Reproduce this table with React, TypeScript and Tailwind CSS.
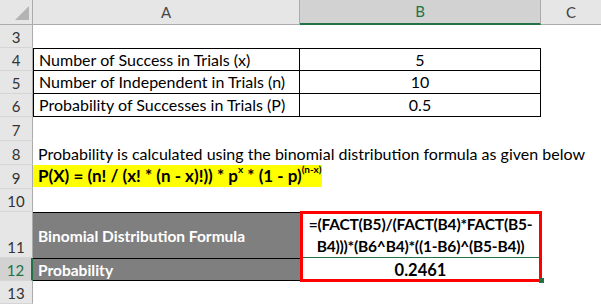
const FONT = "font-['Lato','Liberation_Sans',sans-serif]"

function RowHead({ n, h, active }: { n: number | string; h: string; active?: boolean }) {
  return (
    <div
      className={`${h} flex items-end justify-center pb-[2px] text-[15px] leading-none border-b border-[#d5d5d5] ${
        active
          ? 'bg-[#d2d2d2] text-[#217346] border-r-2 border-r-[#217346]'
          : 'bg-[#e6e6e6] text-[#333] border-r border-r-[#ababab]'
      }`}
    >
      {n}
    </div>
  )
}

export default function App() {
  return (
    <div className={`relative w-[601px] h-[304px] overflow-hidden bg-white text-black ${FONT}`}>
      {/* column headers */}
      <div className="grid grid-cols-[33px_267px_241px_60px] h-[25px] text-[15px] leading-none text-[#444]">
        <div className="bg-[#e6e6e6] border-r border-b border-[#ababab] flex items-end justify-end pr-[3px] pb-[4px]">
          <svg width="14" height="14" viewBox="0 0 14 14">
            <polygon points="14,0 14,14 0,14" fill="#b4b4b4" />
          </svg>
        </div>
        <div className="bg-[#e6e6e6] border-r border-b border-[#ababab] flex items-center justify-center">A</div>
        <div className="bg-[#d2d2d2] border-r border-[#ababab] border-b-2 border-b-[#217346] flex items-center justify-center text-[#217346]">
          B
        </div>
        <div className="bg-[#e6e6e6] border-b border-[#ababab] flex items-center justify-center">C</div>
      </div>

      {/* body */}
      <div className="grid grid-cols-[33px_267px_241px_60px] grid-rows-[23px_23px_23px_23px_24px_24px_24px_23px_46px_23px_23px] text-[16px] leading-[18px]">
        <RowHead n={3} h="h-[23px]" />
        <div className="col-span-3" />

        <RowHead n={4} h="h-[23px]" />
        <div className="border border-black flex items-center pl-[5px]">Number of Success in Trials (x)</div>
        <div className="border-y border-r border-black flex items-center justify-center">5</div>
        <div />

        <RowHead n={5} h="h-[23px]" />
        <div className="border-x border-b border-black flex items-center pl-[5px]">Number of Independent in Trials (n)</div>
        <div className="border-r border-b border-black flex items-center justify-center">10</div>
        <div />

        <RowHead n={6} h="h-[23px]" />
        <div className="border-x border-b border-black flex items-center pl-[5px]">Probability of Successes in Trials (P)</div>
        <div className="border-r border-b border-black flex items-center justify-center">0.5</div>
        <div />

        <RowHead n={7} h="h-[24px]" />
        <div className="col-span-3" />

        <RowHead n={8} h="h-[24px]" />
        <div className="col-span-3 flex items-end pl-[5px] pb-[2px] whitespace-nowrap">
          Probability is calculated using the binomial distribution formula as given below
        </div>

        <RowHead n={9} h="h-[24px]" />
        <div className="col-span-3 flex items-start">
          <div className="h-[22px] w-[289px] bg-[#ffff00] flex items-center pl-[5px] font-bold text-[17px] whitespace-nowrap">
            P(X) = (n! / (x! * (n - x)!)) * p<sup className="text-[10px] -top-[7px]">x</sup>&nbsp;* (1 - p)
            <sup className="text-[10px] -top-[7px]">(n-x)</sup>
          </div>
        </div>

        <RowHead n={10} h="h-[23px]" />
        <div className="col-span-3" />

        <RowHead n={11} h="h-[46px]" />
        <div className="bg-[#7f7f7f] border-t border-black text-white font-bold text-[15.5px] flex items-center pl-[5px]">
          Binomial Distribution Formula
        </div>
        <div className="border-b border-b-[#217346] flex flex-col items-center justify-center font-bold text-[15.5px] leading-[22px] tracking-[-0.2px]">
          <span>=(FACT(B5)/(FACT(B4)*FACT(B5-</span>
          <span>B4)))*(B6^B4)*((1-B6)^(B5-B4))</span>
        </div>
        <div />

        <RowHead n={12} h="h-[23px]" active />
        <div className="bg-[#7f7f7f] border-y border-black text-white font-bold text-[15.5px] flex items-center pl-[5px]">
          Probability
        </div>
        <div className="flex items-center justify-center font-bold text-[16.5px]">0.2461</div>
        <div />

        <RowHead n={13} h="h-[23px]" />
        <div className="col-span-3" />
      </div>

      {/* red highlight box over B11:B12 */}
      <div className="absolute left-[300px] top-[211px] w-[242px] h-[71px] border-[3px] border-[#ff0000]" />
      {/* fill handle */}
      <div className="absolute left-[539px] top-[278px] w-[5px] h-[5px] bg-[#217346]" />
    </div>
  )
}
